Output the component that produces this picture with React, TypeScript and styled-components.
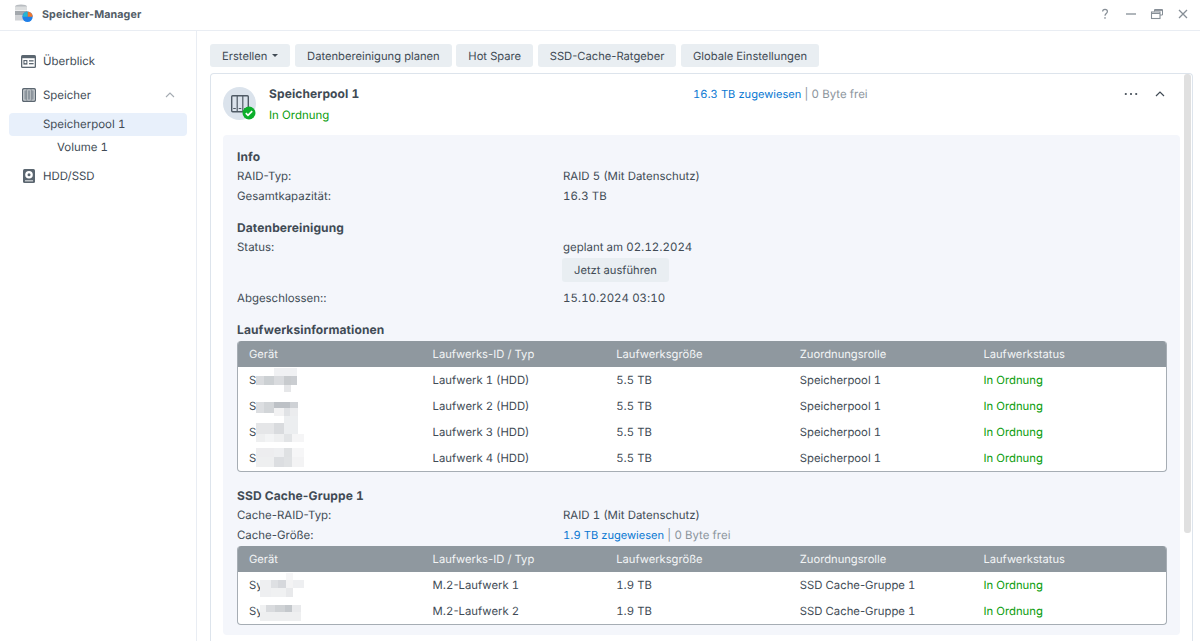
import React from "react";
import styled, { createGlobalStyle } from "styled-components";

const Global = createGlobalStyle`
  html, body { margin: 0; padding: 0; height: 100%; background: #fff; overflow: hidden; }
  #root { height: 100%; }
  * { box-sizing: border-box; }
`;

const Window = styled.div`
  width: 1200px; height: 641px; display: flex; flex-direction: column; overflow: hidden;
  font-family: Inter, sans-serif; font-size: 11.45px; color: #414b55;
  text-rendering: geometricPrecision;
`;
const Digits = styled.span`font-feature-settings: "tnum";`;
const TitleBar = styled.header`
  height: 31px; flex: none; display: flex; align-items: center; border-bottom: 1px solid #e9edf3;
  padding: 0 10px 2px 14px;
`;
const Title = styled.div`font-weight: 700; font-size: 10.7px; letter-spacing: 0.1px; color: #525c66; margin-left: 8px; flex: 1;`;
const WinButtons = styled.div`display: flex; align-items: center; gap: 12px;`;
const Body = styled.div`flex: 1; display: flex; min-height: 0;`;
const Sidebar = styled.nav`
  width: 197px; flex: none; border-right: 1px solid #e9edf3; padding: 18px 9px 0; display: flex; flex-direction: column;
`;
const NavItem = styled.div<{ $mt?: number }>`
  display: flex; align-items: center; height: 24px; margin-top: ${p => p.$mt ?? 0}px;
  padding-left: 12px; color: #414b55;
`;
const IconSlot = styled.span`width: 15px; margin-right: 7px; display: flex; justify-content: center; flex: none;`;
const SubGroup = styled.div`margin-top: 6px;`;
const SubItem = styled.div<{ $active?: boolean; $indent: number }>`
  height: 23px; line-height: 23px; padding-left: ${p => p.$indent}px; border-radius: 4px;
  background: ${p => (p.$active ? "#e8f0fb" : "transparent")}; color: #414b55;
`;
const NavChevron = styled.span`margin-left: auto; margin-right: 12px; display: flex;`;
const Main = styled.main`flex: 1; min-width: 0; display: flex; flex-direction: column; padding: 13px 7px 0 13px;`;
const Toolbar = styled.div`display: flex; gap: 4.6px; height: 23px; flex: none; margin-bottom: 6px;`;
const Button = styled.button`
  border: 0; border-radius: 3px; background: #e9eef2; color: #414b55; font: inherit; font-size: 11.2px; padding: 0 12px;
  text-rendering: inherit; height: 23px; display: inline-flex; align-items: center; gap: 5px; white-space: nowrap;
`;
const Caret = styled.span`
  width: 0; height: 0; border-left: 3px solid transparent; border-right: 3px solid transparent; border-top: 3px solid #414b55;
`;
const Card = styled.section`
  flex: 1; min-height: 0; border: 1px solid #dde4ec; border-bottom: 0; border-radius: 4px 4px 0 0; position: relative;
  padding: 0 12px; overflow: hidden;
`;
const Scrollbar = styled.div`
  position: absolute; right: 1px; top: 0; width: 7px; height: 459px; background: #e0e0e0; border-radius: 3px;
`;
const PoolHead = styled.div`display: flex; height: 61px; position: relative;`;
const PoolIcon = styled.div`width: 46px; flex: none; padding-top: 13px;`;
const PoolText = styled.div`display: flex; flex-direction: column; width: 424px;`;
const Bold = styled.div`font-weight: 700; font-size: 12px; letter-spacing: 0.12px;`;
const PoolName = styled(Bold)`margin-top: 13px; height: 14px; line-height: 14px; color: #414b55;`;
const Ok = styled.span`color: #089c0a;`;
const PoolOk = styled(Ok)`margin-top: 6px; line-height: 16px;`;
const Usage = styled.div`padding-top: 12px; line-height: 16px; color: #8b949c; flex: 1;`;
const Blue = styled.span`color: #0a78d2; font-size: 11.1px;`;
const Actions = styled.div`display: flex; align-items: flex-start; padding: 13px 15px 0 0; gap: 17px;`;
const Panel = styled.div`background: #f4f6fb; border-radius: 4px; padding: 12px 13px 0 14px; height: 500px; width: 957px;`;
const SectionTitle = styled(Bold)<{ $mt?: number }>`line-height: 19px; height: 20px; margin-top: ${p => p.$mt ?? 0}px;`;
const InfoRow = styled.div<{ $h?: number }>`display: flex; line-height: 19px; height: ${p => p.$h ?? 20}px;`;
const Label = styled.div`width: 326px; flex: none;`;
const Value = styled.div`display: flex; flex-direction: column; align-items: flex-start;`;
const RunButton = styled(Button)`height: 24px; margin: 1px 0 0 -1px; padding: 0 12px;`;
const Muted = styled.span`color: #8b949c;`;
const Table = styled.div<{ $mt?: number }>`
  width: 930px; border: 1px solid #a6adb4; border-top: 0; border-radius: 4px; overflow: hidden; background: #fff; margin-top: ${p => p.$mt ?? 0}px;
`;
const TableGrid = styled.div`display: grid; grid-template-columns: repeat(5, 183.6px); padding: 0 11px;`;
const Head = styled(TableGrid)`height: 26px; margin: 0 -1px; background: #8f989f; color: #f2f4f5; font-size: 11.2px; align-items: center; padding: 0 12px 1px;`;
const Row = styled(TableGrid)`height: 26px; align-items: center; color: #414b55; font-size: 11.3px;`;
const Cell = styled.div`position: relative; white-space: nowrap;`;
const Mosaic = styled.svg`position: absolute; left: 0; top: calc(50% - 12px);`;

/* Digit runs use Inter's tabular figures (the footed "1" of the reference); punctuation stays proportional. */
const T = ({ children }: { children: string }) => (
  <>{children.split(/(\d+)/).map((s, i) => (i % 2 ? <Digits key={i}>{s}</Digits> : s))}</>
);

type B = [number, number, number, number, string];
const M = ({ blocks }: { blocks: B[] }) => (
  <Mosaic width="60" height="30" viewBox="0 0 60 30" aria-hidden>
    {blocks.map(([x, y, w, h, c], i) => <rect key={i} x={x} y={y} width={w} height={h} fill={c} />)}
  </Mosaic>
);

const mosaics: B[][] = [
  [[25,0,23,8,"#f0f1f3"],[7,8,8,9,"#d9dbde"],[15,8,10,9,"#ccd0d3"],[25,8,10,9,"#d9dbde"],[35,8,7,9,"#c8cbce"],[42,8,6,9,"#cacdd1"],[35,17,7,7,"#e6e7e9"]],
  [[7,8,18,11,"#dcdee1"],[15,8,10,11,"#d2d5d8"],[25,8,16,6,"#bdc1c6"],[41,8,8,6,"#cfd2d6"],[25,14,10,8,"#f2f2f3"],[35,14,6,8,"#e0e2e5"],[41,14,8,8,"#ebecee"],[35,22,14,6,"#eceef0"]],
  [[7,3,18,11,"#e5e6e8"],[25,3,10,11,"#d9dbde"],[35,0,14,14,"#eceef0"],[7,14,9,8,"#eeeff0"],[16,14,9,8,"#f3f4f5"],[25,14,10,8,"#eeeff0"],[35,14,8,8,"#e2e4e6"],[43,14,12,8,"#f5f5f6"]],
  [[7,2,18,9,"#ededef"],[25,2,10,9,"#eeeff1"],[35,2,8,9,"#dfe1e3"],[43,2,12,9,"#f6f6f7"],[7,11,18,10,"#eeeff0"],[25,11,10,10,"#dcdee1"],[35,11,8,10,"#e0e2e4"],[43,11,12,10,"#f3f3f4"]],
  [[37,0,7,7,"#f6f6f7"],[11,7,11,8,"#eeeff1"],[22,7,7,8,"#dee0e3"],[29,7,8,8,"#d6d8dc"],[37,7,7,8,"#f3f3f4"],[44,7,11,8,"#eeeff1"],[11,15,11,9,"#eeeff1"],[22,15,15,9,"#f0f1f2"],[37,15,7,9,"#e8e9eb"]],
  [[11,6,6,7,"#f0f1f2"],[17,6,9,7,"#d9dbde"],[26,6,10,7,"#cfd2d5"],[36,6,7,7,"#c4c8cc"],[43,6,9,7,"#e9eaec"],[11,13,41,9,"#eeeff0"]],
];

const Check = () => (
  <svg width="14" height="14" viewBox="0 0 14 14"><circle cx="7" cy="7" r="6.5" fill="#0caf2b" /><path d="M3.8 7.2l2.2 2.2 4.2-4.3" stroke="#fff" strokeWidth="1.7" fill="none" /></svg>
);

const ChevronUp = ({ color = "#414b55" }: { color?: string }) => (
  <svg width="10" height="6" viewBox="0 0 10 6"><path d="M1 5l4-4 4 4" fill="none" stroke={color} strokeWidth="1.1" /></svg>
);

const Logo = () => (
  <svg width="20" height="20" viewBox="0 0 20 20">
    <ellipse cx="7" cy="2.5" rx="6" ry="2" fill="#b9bdc1" />
    <rect x="1" y="2.5" width="12" height="4" fill="#dcdedf" />
    <rect x="1" y="7" width="12" height="4.5" fill="#a3a8ad" />
    <rect x="1" y="12" width="12" height="4.5" fill="#d0d2d5" />
    <circle cx="13.5" cy="12.8" r="5.2" fill="#1f7fe8" />
    <path d="M13.5 7.6a5.2 5.2 0 0 1 5.2 5.2h-5.2z" fill="#f0772e" />
    <path d="M13.5 7.6v5.2h-4.6a5.2 5.2 0 0 1 4.6-5.2z" fill="#25b7d0" />
  </svg>
);

const OverviewIcon = () => (
  <svg width="15" height="13" viewBox="0 0 15 13">
    <rect width="15" height="13" rx="1.5" fill="#5b6670" />
    <rect x="1.3" y="3.2" width="12.4" height="8.5" fill="#fff" />
    <rect x="2.4" y="5" width="4" height="4.6" fill="#5b6670" />
    <circle cx="4.4" cy="7.2" r="1.1" fill="#fff" />
    <rect x="8" y="5.2" width="4.6" height="1.3" fill="#5b6670" />
    <rect x="8" y="8" width="4.6" height="1.3" fill="#5b6670" />
  </svg>
);
const StorageIcon = () => (
  <svg width="14" height="14" viewBox="0 0 14 14">
    <rect x=".7" y=".7" width="12.6" height="12.6" rx="1" fill="#fff" stroke="#5b6670" strokeWidth="1.4" />
    <rect x="2.2" y="2.2" width="2.2" height="9.6" fill="#8f98a0" />
    <rect x="5.9" y="2.2" width="2.2" height="9.6" fill="#8f98a0" />
    <rect x="9.6" y="2.2" width="2.2" height="9.6" fill="#8f98a0" />
    <path d="M4.9 1.5v11M9.1 1.5v11" stroke="#5b6670" strokeWidth="1" />
  </svg>
);
const DiskIcon = () => (
  <svg width="12" height="14" viewBox="0 0 12 14">
    <rect width="12" height="14" rx="1.5" fill="#5b6670" />
    <circle cx="6" cy="5.8" r="3.8" fill="#fff" />
    <circle cx="6" cy="5.8" r="1.5" fill="#5b6670" />
    <rect x="2" y="11.2" width="8" height="1.2" fill="#fff" opacity=".75" />
  </svg>
);
const PoolBadgeWrap = styled.div`position: relative; width: 33px; height: 33px;`;
const BadgeCheck = styled.span`position: absolute; right: 0; bottom: 0; display: flex;`;
const PoolBadge = () => (
  <PoolBadgeWrap>
    <svg width="33" height="33" viewBox="0 0 33 33">
      <circle cx="16.5" cy="16.5" r="16.5" fill="#dbe3ec" />
      <rect x="8.7" y="8.7" width="16.6" height="16" rx="1" fill="#dbe3ec" stroke="#4f5a65" strokeWidth="1.4" />
      <path d="M14.2 9v15.5M19.8 9v15.5" stroke="#4f5a65" strokeWidth="1.2" />
      <path d="M10.2 21.5h2.6M15.7 21.5h2.6M21.2 21.5h2.6" stroke="#4f5a65" strokeWidth="1" />
    </svg>
    <BadgeCheck><Check /></BadgeCheck>
  </PoolBadgeWrap>
);

const head = ["Gerät", "Laufwerks-ID / Typ", "Laufwerksgröße", "Zuordnungsrolle", "Laufwerkstatus"];
const rows1 = [1, 2, 3, 4];

export default function App() {
  return (
    <Window>
      <Global />
      <TitleBar>
        <Logo />
        <Title>Speicher-Manager</Title>
        <WinButtons>
          <svg width="14" height="12" viewBox="0 0 14 12"><path d="M4.6 3.6C4.6 2.2 5.7 1.3 7 1.3s2.4.9 2.4 2.2c0 1.9-2.4 2-2.4 4.2" fill="none" stroke="#868e96" strokeWidth="1.2" /><rect x="6.3" y="9.2" width="1.4" height="1.5" fill="#868e96" /></svg>
          <svg width="14" height="12" viewBox="0 0 14 12"><path d="M2 6h10" stroke="#868e96" strokeWidth="1.3" /></svg>
          <svg width="14" height="12" viewBox="0 0 14 12"><path d="M4.5 3.5V1.5h8v5.5h-2.5" fill="none" stroke="#868e96" strokeWidth="1" /><path d="M4.5 2.6h8" stroke="#868e96" strokeWidth="1" /><rect x="1.5" y="4" width="8.5" height="6.5" fill="none" stroke="#868e96" strokeWidth="1.1" /><path d="M1.5 5.5h8.5" stroke="#868e96" strokeWidth="1" /></svg>
          <svg width="14" height="12" viewBox="0 0 14 12"><path d="M3 2l8 8M11 2l-8 8" stroke="#868e96" strokeWidth="1.3" /></svg>
        </WinButtons>
      </TitleBar>
      <Body>
        <Sidebar>
          <NavItem><IconSlot><OverviewIcon /></IconSlot>Überblick</NavItem>
          <NavItem $mt={10}><IconSlot><StorageIcon /></IconSlot>Speicher<NavChevron><ChevronUp color="#a4abb2" /></NavChevron></NavItem>
          <SubGroup>
            <SubItem $active $indent={34}><T>Speicherpool 1</T></SubItem>
            <SubItem $indent={48}><T>Volume 1</T></SubItem>
          </SubGroup>
          <NavItem $mt={5}><IconSlot><DiskIcon /></IconSlot>HDD/SSD</NavItem>
        </Sidebar>
        <Main>
          <Toolbar>
            <Button>Erstellen <Caret /></Button>
            <Button>Datenbereinigung planen</Button>
            <Button>Hot Spare</Button>
            <Button>SSD-Cache-Ratgeber</Button>
            <Button>Globale Einstellungen</Button>
          </Toolbar>
          <Card>
            <Scrollbar />
            <PoolHead>
              <PoolIcon><PoolBadge /></PoolIcon>
              <PoolText>
                <PoolName><T>Speicherpool 1</T></PoolName>
                <PoolOk>In Ordnung</PoolOk>
              </PoolText>
              <Usage><Blue><T>16.3 TB zugewiesen</T></Blue> | <T>0 Byte frei</T></Usage>
              <Actions>
                <svg width="14" height="14" viewBox="0 0 14 14"><circle cx="1.8" cy="7" r="1.1" fill="#414b55" /><circle cx="7" cy="7" r="1.1" fill="#414b55" /><circle cx="12.2" cy="7" r="1.1" fill="#414b55" /></svg>
                <svg width="10" height="14" viewBox="0 0 10 14"><path d="M1 9l4-4 4 4" fill="none" stroke="#414b55" strokeWidth="1.2" /></svg>
              </Actions>
            </PoolHead>
            <Panel>
              <SectionTitle>Info</SectionTitle>
              <InfoRow><Label>RAID-Typ:</Label><Value><span><T>RAID 5 (Mit Datenschutz)</T></span></Value></InfoRow>
              <InfoRow><Label>Gesamtkapazität:</Label><Value><span><T>16.3 TB</T></span></Value></InfoRow>
              <SectionTitle $mt={11}>Datenbereinigung</SectionTitle>
              <InfoRow $h={51}><Label>Status:</Label><Value><span><T>geplant am 02.12.2024</T></span><RunButton>Jetzt ausführen</RunButton></Value></InfoRow>
              <InfoRow><Label>Abgeschlossen::</Label><Value><span><T>15.10.2024 03:10</T></span></Value></InfoRow>
              <SectionTitle $mt={11}>Laufwerksinformationen</SectionTitle>
              <Table $mt={1}>
                <Head>{head.map(h => <div key={h}>{h}</div>)}</Head>
                {rows1.map((n, i) => (
                  <Row key={n}>
                    <Cell>S<M blocks={mosaics[i]} /></Cell>
                    <Cell><T>{`Laufwerk ${n} (HDD)`}</T></Cell>
                    <Cell><T>5.5 TB</T></Cell>
                    <Cell><T>Speicherpool 1</T></Cell>
                    <Cell><Ok>In Ordnung</Ok></Cell>
                  </Row>
                ))}
              </Table>
              <SectionTitle $mt={14}><T>SSD Cache-Gruppe 1</T></SectionTitle>
              <InfoRow><Label>Cache-RAID-Typ:</Label><Value><span><T>RAID 1 (Mit Datenschutz)</T></span></Value></InfoRow>
              <InfoRow><Label>Cache-Größe:</Label><Value><span><Blue><T>1.9 TB zugewiesen</T></Blue> <Muted>| <T>0 Byte frei</T></Muted></span></Value></InfoRow>
              <Table>
                <Head>{head.map(h => <div key={h}>{h}</div>)}</Head>
                {[1, 2].map((n, i) => (
                  <Row key={n}>
                    <Cell>Sy<M blocks={mosaics[4 + i]} /></Cell>
                    <Cell><T>{`M.2-Laufwerk ${n}`}</T></Cell>
                    <Cell><T>1.9 TB</T></Cell>
                    <Cell><T>SSD Cache-Gruppe 1</T></Cell>
                    <Cell><Ok>In Ordnung</Ok></Cell>
                  </Row>
                ))}
              </Table>
            </Panel>
          </Card>
        </Main>
      </Body>
    </Window>
  );
}
